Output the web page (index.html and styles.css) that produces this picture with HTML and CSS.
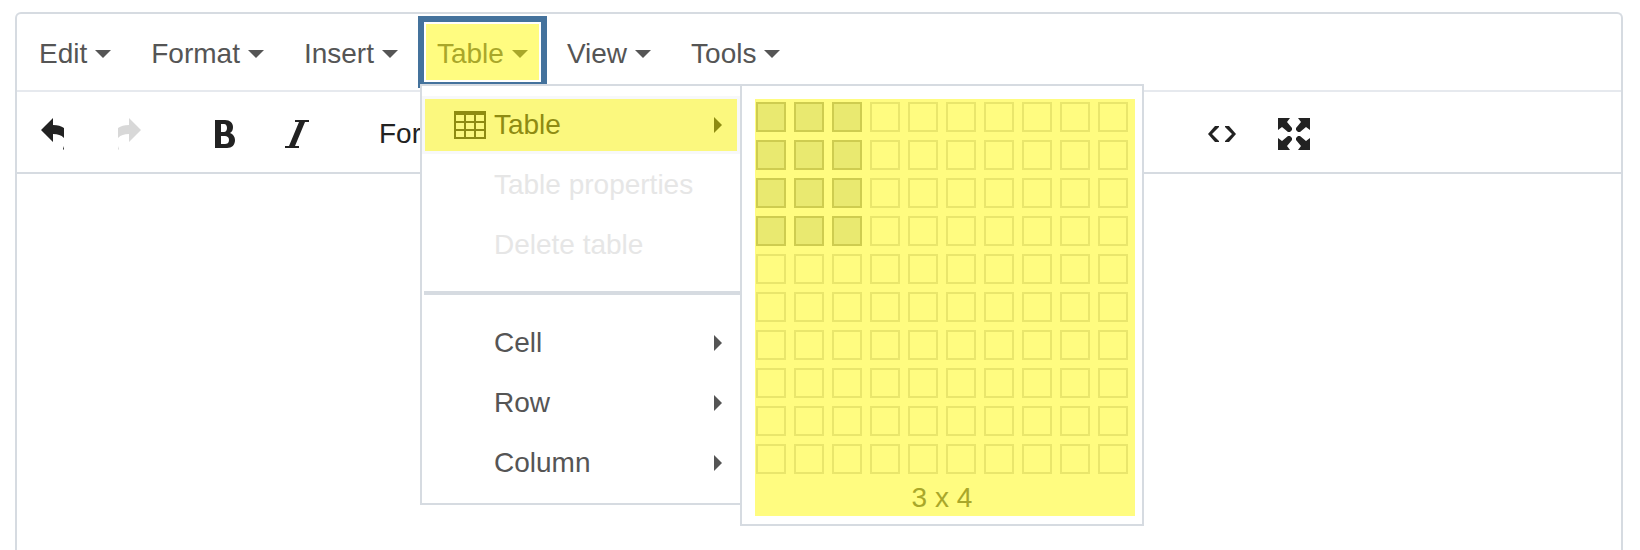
FILE: index.html
```html
<!DOCTYPE html>
<html lang="en">
<head>
    <meta charset="UTF-8">
    <meta name="viewport" content="width=device-width, initial-scale=1.0">
    <title>Editor</title>
    <link rel="stylesheet" href="styles.css">
</head>
<body>

    <div class="editor">
        <!-- Menu bar -->
        <div class="menubar">
            <button class="menu-button">Edit<span class="caret"></span></button>
            <button class="menu-button">Format<span class="caret"></span></button>
            <button class="menu-button">Insert<span class="caret"></span></button>
            <div class="menu-holder">
                <button class="menu-button active">Table<span class="caret"></span></button>

                <!-- Table menu -->
                <div class="menu">
                    <button class="menu-item selected">
                        <svg class="item-icon" width="32" height="28" viewBox="0 0 32 28">
                            <path fill="currentColor" fill-rule="evenodd" d="M0 0h32v28H0zM2 4v6h8V4zM12 4v6h8V4zM22 4v6h8V4zM2 12v6h8v-6zM12 12v6h8v-6zM22 12v6h8v-6zM2 20v6h8v-6zM12 20v6h8v-6zM22 20v6h8v-6z"/>
                        </svg>
                        Table<span class="arrow"></span>
                    </button>
                    <button class="menu-item" disabled>Table properties</button>
                    <button class="menu-item" disabled>Delete table</button>
                    <div class="separator"></div>
                    <button class="menu-item">Cell<span class="arrow"></span></button>
                    <button class="menu-item">Row<span class="arrow"></span></button>
                    <button class="menu-item">Column<span class="arrow"></span></button>

                    <!-- Table size picker -->
                    <div class="submenu">
                        <div class="picker">
                            <div class="grid" id="grid"></div>
                            <div class="grid-size" id="grid-size"></div>
                        </div>
                    </div>
                </div>
            </div>
            <button class="menu-button">View<span class="caret"></span></button>
            <button class="menu-button">Tools<span class="caret"></span></button>
        </div>

        <!-- Toolbar -->
        <div class="toolbar">
            <div class="group">
                <button class="tool" aria-label="Undo">
                    <svg width="32" height="32" viewBox="0 0 32 32">
                        <path fill="currentColor" d="M2 12L14 0v7c5 0 8 1 11 3v10c-3-3-6-4-11-4v8zM24 31l1-3v4z"/>
                    </svg>
                </button>
                <button class="tool" aria-label="Redo" disabled>
                    <svg width="32" height="32" viewBox="0 0 32 32">
                        <path fill="currentColor" d="M30 12L18 0v7c-5 0-8 1-11 3v10c3-3 6-4 11-4v8zM8 31l-1-3v4z"/>
                    </svg>
                </button>
            </div>
            <div class="group">
                <button class="tool" aria-label="Bold">
                    <svg width="32" height="32" viewBox="0 0 32 32">
                        <path fill="currentColor" fill-rule="evenodd" d="M6 2h10c5 0 8 3 8 7 0 3-1 5-3 6 3 1 5 4 5 7 0 5-3 8-8 8H6zM12 6v8h3c2 0 3-2 3-4s-1-4-3-4zM12 18v8h4c2 0 4-1 4-4s-2-4-4-4z"/>
                    </svg>
                </button>
                <button class="tool" aria-label="Italic">
                    <svg width="32" height="32" viewBox="0 0 32 32">
                        <path fill="currentColor" d="M14 2h14v2h-4L14 28h4v2H4v-2h4L18 4h-4z"/>
                    </svg>
                </button>
            </div>
            <div class="group formats">
                <button class="tool">Formats<span class="caret"></span></button>
            </div>
            <div class="group">
                <button class="tool" aria-label="Source code">
                    <svg width="32" height="32" viewBox="0 0 32 32">
                        <path fill="currentColor" d="M9 8h4v1l-7 7 7 7v1H9l-7-8zM23 8h-4v1l7 7-7 7v1h4l7-8z"/>
                    </svg>
                </button>
                <button class="tool" aria-label="Fullscreen">
                    <svg width="32" height="32" viewBox="0 0 32 32">
                        <path fill="currentColor" d="M0 0h12L9 4l5 6v2l-2 2h-2L4 9l-4 3zM32 0H20l3 4-5 6v2l2 2h2l6-5 4 3zM0 32h12l-3-4 5-6v-2l-2-2h-2l-6 5-4-3zM32 32H20l3-4-5-6v-2l2-2h2l6 5 4-3z"/>
                    </svg>
                </button>
            </div>
        </div>

        <!-- Content -->
        <div class="content"></div>
    </div>

    <script>
        const cols = 3;
        const rows = 4;
        const grid = document.getElementById('grid');

        // Fill the 10 x 10 size picker
        for (let y = 1; y <= 10; y++) {
            for (let x = 1; x <= 10; x++) {
                const cell = document.createElement('button');
                cell.className = x <= cols && y <= rows ? 'cell on' : 'cell';
                cell.setAttribute('aria-label', `${x} x ${y}`);
                grid.appendChild(cell);
            }
        }
        document.getElementById('grid-size').textContent = `${cols} x ${rows}`;
    </script>

</body>
</html>
```

FILE: styles.css
```css
* {
    box-sizing: border-box;
}
html, body {
    height: 100%;
}
body {
    margin: 0;
    padding: 12px 17px 0 15px;
    background-color: white;
    overflow: hidden;
}
body, button {
    font-family: "Liberation Sans", Arial, sans-serif;
    font-size: 28px;
    line-height: 32px;
    color: #555;
}
button {
    margin: 0;
    padding: 0;
    border: none;
    background: none;
    cursor: pointer;
}
.editor {
    display: flex;
    flex-direction: column;
    height: 100%;
    border: 2px solid #d6dbe1;
    border-bottom: none;
    border-radius: 6px 6px 0 0;
}
.menubar {
    display: flex;
    padding: 2px;
    border-bottom: 2px solid #e6e9ee;
}
.menu-button {
    display: flex;
    align-items: center;
    height: 72px;
    padding: 3px 14px 0;
    border: 6px solid transparent;
}
.menu-button.active {
    padding: 3px 13px 0;
    border-color: #44729c;
    box-shadow: inset 0 0 0 2px white;
    background-color: #fffc80;
    color: #a9a72a;
}
.caret {
    margin-left: 8px;
    border: 8px solid transparent;
    border-top-color: currentColor;
    border-bottom: none;
}
.menu-holder {
    position: relative;
}
.menu {
    position: absolute;
    z-index: 1;
    top: 68px;
    left: 2px;
    display: flex;
    flex-direction: column;
    gap: 2px;
    width: 322px;
    padding: 10px 0 11px;
    border: 2px solid #d6dbe1;
    background-color: white;
}
.menu-item {
    display: flex;
    align-items: center;
    height: 58px;
    padding: 0 15px 0 69px;
    border: 3px solid transparent;
    text-align: left;
}
.menu-item:disabled {
    color: #e6e6e6;
}
.menu-item.selected {
    padding-left: 29px;
    border-color: #f7f8fa;
    background-color: #fbf87e;
    color: #8e8b12;
}
.item-icon {
    margin-right: 8px;
}
.arrow {
    margin-left: auto;
    border: 8px solid transparent;
    border-left-color: currentColor;
    border-right: none;
}
.separator {
    height: 4px;
    margin: 15px 0 17px 2px;
    background-color: #d6dbe1;
}
.submenu {
    position: absolute;
    top: -2px;
    left: 100%;
    padding: 13px 7px 8px 13px;
    border: 2px solid #d6dbe1;
    background-color: white;
}
.picker {
    width: 380px;
    padding: 3px 1px 2px;
    background-color: #fffc80;
    color: #a9a72a;
}
.grid {
    display: grid;
    grid-template-columns: repeat(10, 30px);
    gap: 8px;
}
.cell {
    height: 30px;
    border: 2px solid #e9e66c;
}
.cell.on {
    border-color: #cecc50;
    background-color: #e9e970;
}
.grid-size {
    padding: 8px 6px 0 0;
    text-align: center;
}
.toolbar {
    display: flex;
    gap: 30px;
    padding: 8px 4px 4px;
    border-bottom: 2px solid #d6dbe1;
}
.group {
    display: flex;
    gap: 4px;
}
.formats {
    width: 797px;
}
.tool {
    display: flex;
    align-items: center;
    justify-content: center;
    min-width: 68px;
    height: 68px;
    padding: 0 18px;
    color: #222;
}
.tool:disabled {
    color: #d8d8d8;
}
.content {
    flex: 1;
}
```
